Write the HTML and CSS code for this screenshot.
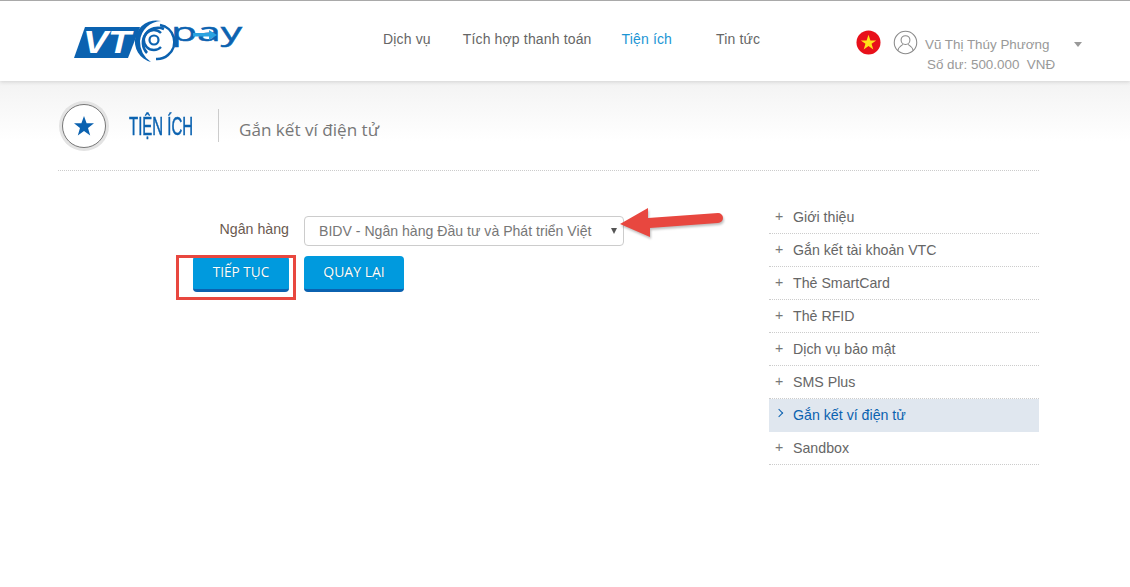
FILE: index.html
```html
<!DOCTYPE html>
<html lang="vi">
<head>
  <meta charset="UTF-8" />
  <title>Gắn kết ví điện tử</title>
  <link rel="stylesheet" href="styles.css">
</head>
<body>

  <header class="top-bar">
    <a class="logo" href="#">
      <svg width="190" height="60" viewBox="0 -10 190 60">
        <polygon points="11,7 66,7 54,38 0,38" fill="#0b62b0"/>
        <text x="9" y="33" class="logo-vt" textLength="48" lengthAdjust="spacingAndGlyphs">VT</text>
        <path d="M87 1 A21 21 0 0 0 77 42 A25 25 0 0 1 66 21 A22 22 0 0 1 87 1Z" fill="#0b62b0"/>
        <path d="M90 9 A15 15 0 0 0 73 33 M86 5 A17 17 0 0 1 94 35 A17 17 0 0 1 82 39" fill="none" stroke="#0b62b0" stroke-width="2.6"/>
        <path d="M87 13 A10 10 0 1 0 87 27" fill="none" stroke="#0b62b0" stroke-width="2.4"/>
        <circle cx="80" cy="20" r="4.5" fill="none" stroke="#0b62b0" stroke-width="2.2"/>
        <text transform="translate(97 21) scale(1.64 1)" class="logo-pay">pay</text>
        <rect x="119" y="13" width="16" height="3.5" fill="#2aa3e0"/>
        <polygon points="135,10 143,15 135,20" fill="#2aa3e0"/>
      </svg>
    </a>
    <nav class="main-nav">
      <a href="#">Dịch vụ</a>
      <a href="#">Tích hợp thanh toán</a>
      <a href="#" class="active">Tiện ích</a>
      <a href="#">Tin tức</a>
    </nav>
    <div class="user-box">
      <svg class="flag" width="25" height="25" viewBox="0 0 26 26">
        <circle cx="13" cy="13" r="12.5" fill="#e8101a"/>
        <polygon points="13,5 15,10.8 21,10.8 16.2,14.4 18,20.2 13,16.6 8,20.2 9.8,14.4 5,10.8 11,10.8" fill="#ffe01a"/>
      </svg>
      <svg class="avatar" width="25" height="25" viewBox="0 0 26 26" fill="none" stroke="#8a8a8a" stroke-width="1.1">
        <circle cx="13" cy="13" r="11.7"/>
        <circle cx="13" cy="10.5" r="4.6"/>
        <path d="M5 21.5 C6 17 9 16 10.5 15 M21 21.5 C20 17 17 16 15.5 15"/>
      </svg>
      <div class="user-info">
        <div class="user-name">Vũ Thị Thúy Phương</div>
        <div class="user-balance">Số dư: 500.000&nbsp; VNĐ</div>
      </div>
      <span class="user-caret"></span>
    </div>
  </header>

  <div class="page">
    <div class="page-title">
      <div class="title-icon">
        <svg width="22" height="22" viewBox="0 0 22 22">
          <polygon points="11,1 13.6,8.2 21,8.2 15,12.9 17.2,20.5 11,16 4.8,20.5 7,12.9 1,8.2 8.4,8.2" fill="#0b62b0"/>
        </svg>
      </div>
      <h1><span>TIỆN ÍCH</span></h1>
      <h2>Gắn kết ví điện tử</h2>
    </div>

    <div class="content">
      <form class="bank-form">
        <div class="form-row">
          <label>Ngân hàng</label>
          <div class="select-box">BIDV - Ngân hàng Đầu tư và Phát triển Việt</div>
        </div>
        <div class="form-buttons">
          <button type="button" class="btn">TIẾP TỤC</button>
          <button type="button" class="btn btn-back">QUAY LẠI</button>
        </div>
      </form>

      <ul class="side-menu">
        <li>Giới thiệu</li>
        <li>Gắn kết tài khoản VTC</li>
        <li>Thẻ SmartCard</li>
        <li>Thẻ RFID</li>
        <li>Dịch vụ bảo mật</li>
        <li>SMS Plus</li>
        <li class="current">Gắn kết ví điện tử</li>
        <li>Sandbox</li>
      </ul>
    </div>
  </div>

  <!-- annotations on top of the screenshot -->
  <div class="mark-box"></div>
  <svg class="mark-arrow" width="110" height="36" viewBox="0 0 110 36">
    <path d="M0 19 L28 3 L28 13 L98 8 A5 5 0 0 1 98 18 L30 23 L30 32Z" fill="#e8473f"/>
  </svg>

</body>
</html>
```

FILE: styles.css
```css
* {
  box-sizing: border-box;
}

body {
  margin: 0;
  font-family: "Liberation Sans", Arial, sans-serif;
  font-size: 14px;
  color: #666;
  background: #fff;
  position: relative;
}

.top-bar {
  display: flex;
  align-items: flex-start;
  height: 81px;
  border-top: 1px solid #a9a9a9;
  background: #fff;
  box-shadow: 0 1px 4px rgba(0,0,0,0.14);
  position: relative;
}

.logo {
  display: block;
  width: 309px;
  margin-left: 74px;
  padding-top: 9px;
}

.logo-vt {
  font: italic bold 32px "Liberation Sans", sans-serif;
  fill: #fff;
}

.logo-pay {
  font: 26px "Open Sans", sans-serif;
  fill: #0b62b0;
  stroke: #0b62b0;
  stroke-width: 0.5px;
}

.main-nav {
  display: flex;
  width: 473px;
  padding-top: 30px;
  font-size: 14px;
  letter-spacing: 0.15px;
}

.main-nav a {
  color: #666;
  text-decoration: none;
  margin-right: 32px;
}

.main-nav a:nth-child(2) {
  margin-right: 30px;
}

.main-nav a:nth-child(3) {
  margin-right: 44px;
}

.main-nav a.active {
  color: #1b95d4;
}

.user-box {
  display: flex;
  align-items: flex-start;
  padding-top: 29px;
  color: #999;
}

.avatar {
  margin-left: 12px;
}

.user-info {
  margin-left: 7px;
  width: 149px;
  padding-top: 7px;
  font-size: 13.4px;
}

.user-balance {
  margin-top: 5px;
  margin-left: 2px;
}

.user-caret {
  margin-top: 12px;
  width: 0;
  height: 0;
  border-left: 4px solid transparent;
  border-right: 4px solid transparent;
  border-top: 5px solid #999;
}

.page {
  height: 506px;
  padding: 0 91px 0 58px;
  background: linear-gradient(#f3f3f3, #fff 60px);
}

.page-title {
  display: flex;
  align-items: flex-start;
  height: 90px;
  padding-top: 23px;
  border-bottom: 1px dotted #ccc;
}

.title-icon {
  display: flex;
  align-items: center;
  justify-content: center;
  width: 44px;
  height: 44px;
  margin-left: 4px;
  border-radius: 50%;
  background: #fff;
  border: 1px solid #777;
  box-shadow: 0 0 0 3px #e3e3e3;
}

.page-title h1 {
  width: 90px;
  height: 33px;
  margin: 5px 0 0 23px;
  font-size: 25px;
  font-weight: normal;
  line-height: 34px;
  color: #0b62b0;
  border-right: 1px solid #ccc;
}

.page-title h1 span {
  display: inline-block;
  white-space: nowrap;
  transform: scaleX(0.6);
  transform-origin: left center;
  -webkit-text-stroke: 0.5px #0b62b0;
}

.page-title h2 {
  margin: 14px 0 0 20px;
  font-family: "Open Sans", sans-serif;
  font-size: 17.1px;
  line-height: 23px;
  font-weight: normal;
  color: #777;
}

.content {
  display: flex;
  justify-content: space-between;
  padding-top: 30px;
}

.bank-form {
  padding-left: 135px;
  padding-top: 15px;
}

.form-row {
  display: flex;
  align-items: center;
  gap: 15px;
}

.form-row label {
  width: 96px;
  padding-bottom: 5px;
  text-align: right;
  font-size: 14.2px;
  color: #6b5a50;
}

.select-box {
  position: relative;
  width: 320px;
  height: 30px;
  line-height: 29px;
  padding-left: 14px;
  border: 1px solid #ccc;
  border-radius: 4px;
  font-size: 14.1px;
  color: #777;
}

.select-box::after {
  content: "";
  position: absolute;
  right: 6px;
  top: 11px;
  border-left: 3.5px solid transparent;
  border-right: 3.5px solid transparent;
  border-top: 6px solid #555;
}

.form-buttons {
  display: flex;
  gap: 15px;
  margin-top: 10px;
}

.btn {
  width: 96px;
  height: 36px;
  padding: 0 0 2px;
  border: none;
  border-bottom: 3px solid #0b62b0;
  border-radius: 4px;
  background: #009ade;
  color: #fff;
  font-family: "Open Sans", sans-serif;
  font-size: 13.6px;
  text-shadow: 0 0 1px rgba(0,0,0,0.3);
}

.btn-back {
  width: 100px;
  font-size: 14px;
}

.side-menu {
  list-style: none;
  width: 270px;
  margin: 0;
  padding: 0;
  font-size: 14.2px;
}

.side-menu li {
  position: relative;
  height: 33px;
  line-height: 32px;
  padding-left: 24px;
  border-bottom: 1px dotted #ccc;
}

.side-menu li::before {
  content: "+";
  position: absolute;
  left: 6px;
  top: -1px;
  color: #777;
}

.side-menu li.current {
  background: #e0e7ef;
  color: #0b62b0;
  border-bottom: none;
}

.side-menu li.current::before {
  content: "";
  left: 7px;
  top: 11px;
  width: 5px;
  height: 5px;
  border-top: 1px solid #0b62b0;
  border-right: 1px solid #0b62b0;
  transform: rotate(45deg);
}

.mark-box {
  position: absolute;
  left: 176px;
  top: 255px;
  width: 120px;
  height: 45px;
  border: 3px solid #e8473f;
}

.mark-arrow {
  position: absolute;
  left: 620px;
  top: 205px;
  filter: drop-shadow(1px 2px 1px rgba(0,0,0,0.25));
}
```
